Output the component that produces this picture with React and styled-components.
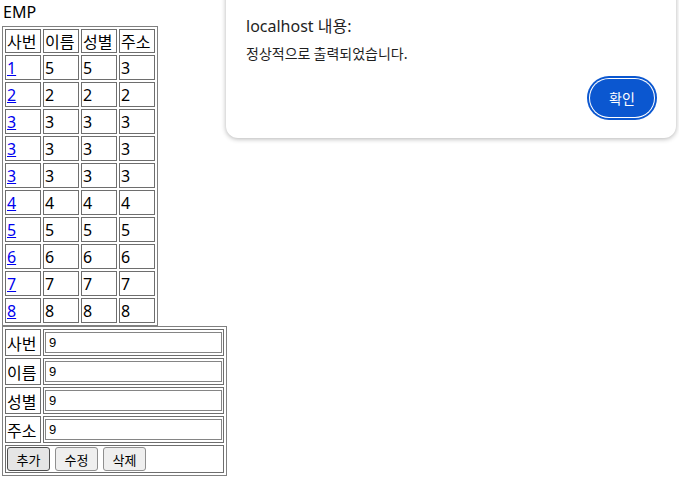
import React from "react";
import styled, { createGlobalStyle } from "styled-components";

const GlobalStyle = createGlobalStyle`
    html, body {
        margin: 0;
        padding: 0;
        background: #fff;
    }
    body {
        font-family: "Noto Sans", "Noto Sans CJK KR", sans-serif;
        font-size: 16px;
        color: #000;
    }
`;

const rows = [
    ["1", "5", "5", "3"],
    ["2", "2", "2", "2"],
    ["3", "3", "3", "3"],
    ["3", "3", "3", "3"],
    ["3", "3", "3", "3"],
    ["4", "4", "4", "4"],
    ["5", "5", "5", "5"],
    ["6", "6", "6", "6"],
    ["7", "7", "7", "7"],
    ["8", "8", "8", "8"],
];

const fields = ["사번", "이름", "성별", "주소"];

const App = () => {
    return (
        <Page>
            <GlobalStyle />
            <Title>EMP</Title>
            <Table>
                <tbody>
                    <tr>
                        {fields.map((f) => (
                            <HeadCell key={f}>{f}</HeadCell>
                        ))}
                    </tr>
                    {rows.map((r, i) => (
                        <tr key={i}>
                            <Cell>
                                <IdLink href="#">{r[0]}</IdLink>
                            </Cell>
                            <Cell>{r[1]}</Cell>
                            <Cell>{r[2]}</Cell>
                            <Cell>{r[3]}</Cell>
                        </tr>
                    ))}
                </tbody>
            </Table>
            <Table>
                <tbody>
                    {fields.map((f) => (
                        <tr key={f}>
                            <FormLabel>{f}</FormLabel>
                            <FormCell>
                                <Input defaultValue="9" />
                            </FormCell>
                        </tr>
                    ))}
                    <tr>
                        <ButtonCell colSpan={2}>
                            <Buttons>
                                <FormButton $active>추가</FormButton>
                                <FormButton>수정</FormButton>
                                <FormButton>삭제</FormButton>
                            </Buttons>
                        </ButtonCell>
                    </tr>
                </tbody>
            </Table>

            <Dialog>
                <DialogTitle>localhost 내용:</DialogTitle>
                <DialogMessage>정상적으로 출력되었습니다.</DialogMessage>
                <DialogFooter>
                    <OkButton>확인</OkButton>
                </DialogFooter>
            </Dialog>
        </Page>
    );
};

export default App;

const Page = styled.div`
    position: relative;
    width: 679px;
    height: 482px;
    padding-left: 2px;
    box-sizing: border-box;
    overflow: hidden;
`;

const Title = styled.div`
    height: 26px;
    line-height: 24px;
    padding-left: 1px;
    font-size: 16px;
`;

const Table = styled.table`
    border: 1px solid #808080;
    border-spacing: 2px;
    border-collapse: separate;
`;

const Cell = styled.td`
    box-sizing: border-box;
    width: 36px;
    height: 25px;
    padding: 0 1px;
    border: 1px solid #6e6e6e;
    line-height: 22px;
    font-size: 16px;
    vertical-align: middle;
    white-space: nowrap;
`;

const HeadCell = styled(Cell)`
    height: 24px;
    font-family: "Noto Sans CJK KR", sans-serif;
`;

const IdLink = styled.a`
    color: #0000ee;
    text-decoration: underline;
`;

const FormLabel = styled(Cell)`
    height: 27px;
    font-family: "Noto Sans CJK KR", sans-serif;
`;

const FormCell = styled.td`
    box-sizing: border-box;
    width: 181px;
    height: 27px;
    padding: 1px;
    border: 1px solid #6e6e6e;
    vertical-align: middle;
`;

const Input = styled.input`
    display: block;
    box-sizing: border-box;
    width: 177px;
    height: 21px;
    margin: 0;
    padding: 1px 3px;
    border: 1px solid #858585;
    font-family: "Liberation Sans", Arial, sans-serif;
    font-size: 13px;
    color: #000;
    outline: none;
`;

const ButtonCell = styled.td`
    box-sizing: border-box;
    height: 28px;
    padding: 1px;
    border: 1px solid #6e6e6e;
    vertical-align: middle;
`;

const Buttons = styled.div`
    display: flex;
    gap: 5px;
`;

const FormButton = styled.button`
    box-sizing: border-box;
    width: 43px;
    height: 24px;
    padding: 0;
    border: 1px solid ${(p) => (p.$active ? "#4f4f4f" : "#8f8f8f")};
    border-radius: 3px;
    background: ${(p) => (p.$active ? "#e5e5e5" : "#efefef")};
    font-family: "Noto Sans CJK KR", sans-serif;
    font-size: 13px;
    color: #000;
`;

const Dialog = styled.div`
    position: absolute;
    left: 226px;
    top: -14px;
    width: 450px;
    height: 152px;
    box-sizing: border-box;
    padding: 29px 22px 0 20px;
    display: flex;
    flex-direction: column;
    background: #fff;
    border-radius: 12px;
    box-shadow: 0 1px 5px rgba(0, 0, 0, 0.3);
    color: #1f1f1f;
`;

const DialogTitle = styled.div`
    font-family: "Noto Sans", "Noto Sans CJK KR", sans-serif;
    font-size: 16px;
    line-height: 22px;
`;

const DialogMessage = styled.div`
    margin-top: 7px;
    font-family: "Noto Sans CJK KR", sans-serif;
    font-size: 14px;
    line-height: 19px;
`;

const DialogFooter = styled.div`
    display: flex;
    justify-content: flex-end;
    margin-top: 16px;
`;

const OkButton = styled.button`
    width: 64px;
    height: 38px;
    border: none;
    border-radius: 19px;
    background: #0b57d0;
    color: #fff;
    font-family: "Noto Sans CJK KR", sans-serif;
    font-size: 14px;
    box-shadow: 0 0 0 1px #fff, 0 0 0 3px #0b57d0;
`;
